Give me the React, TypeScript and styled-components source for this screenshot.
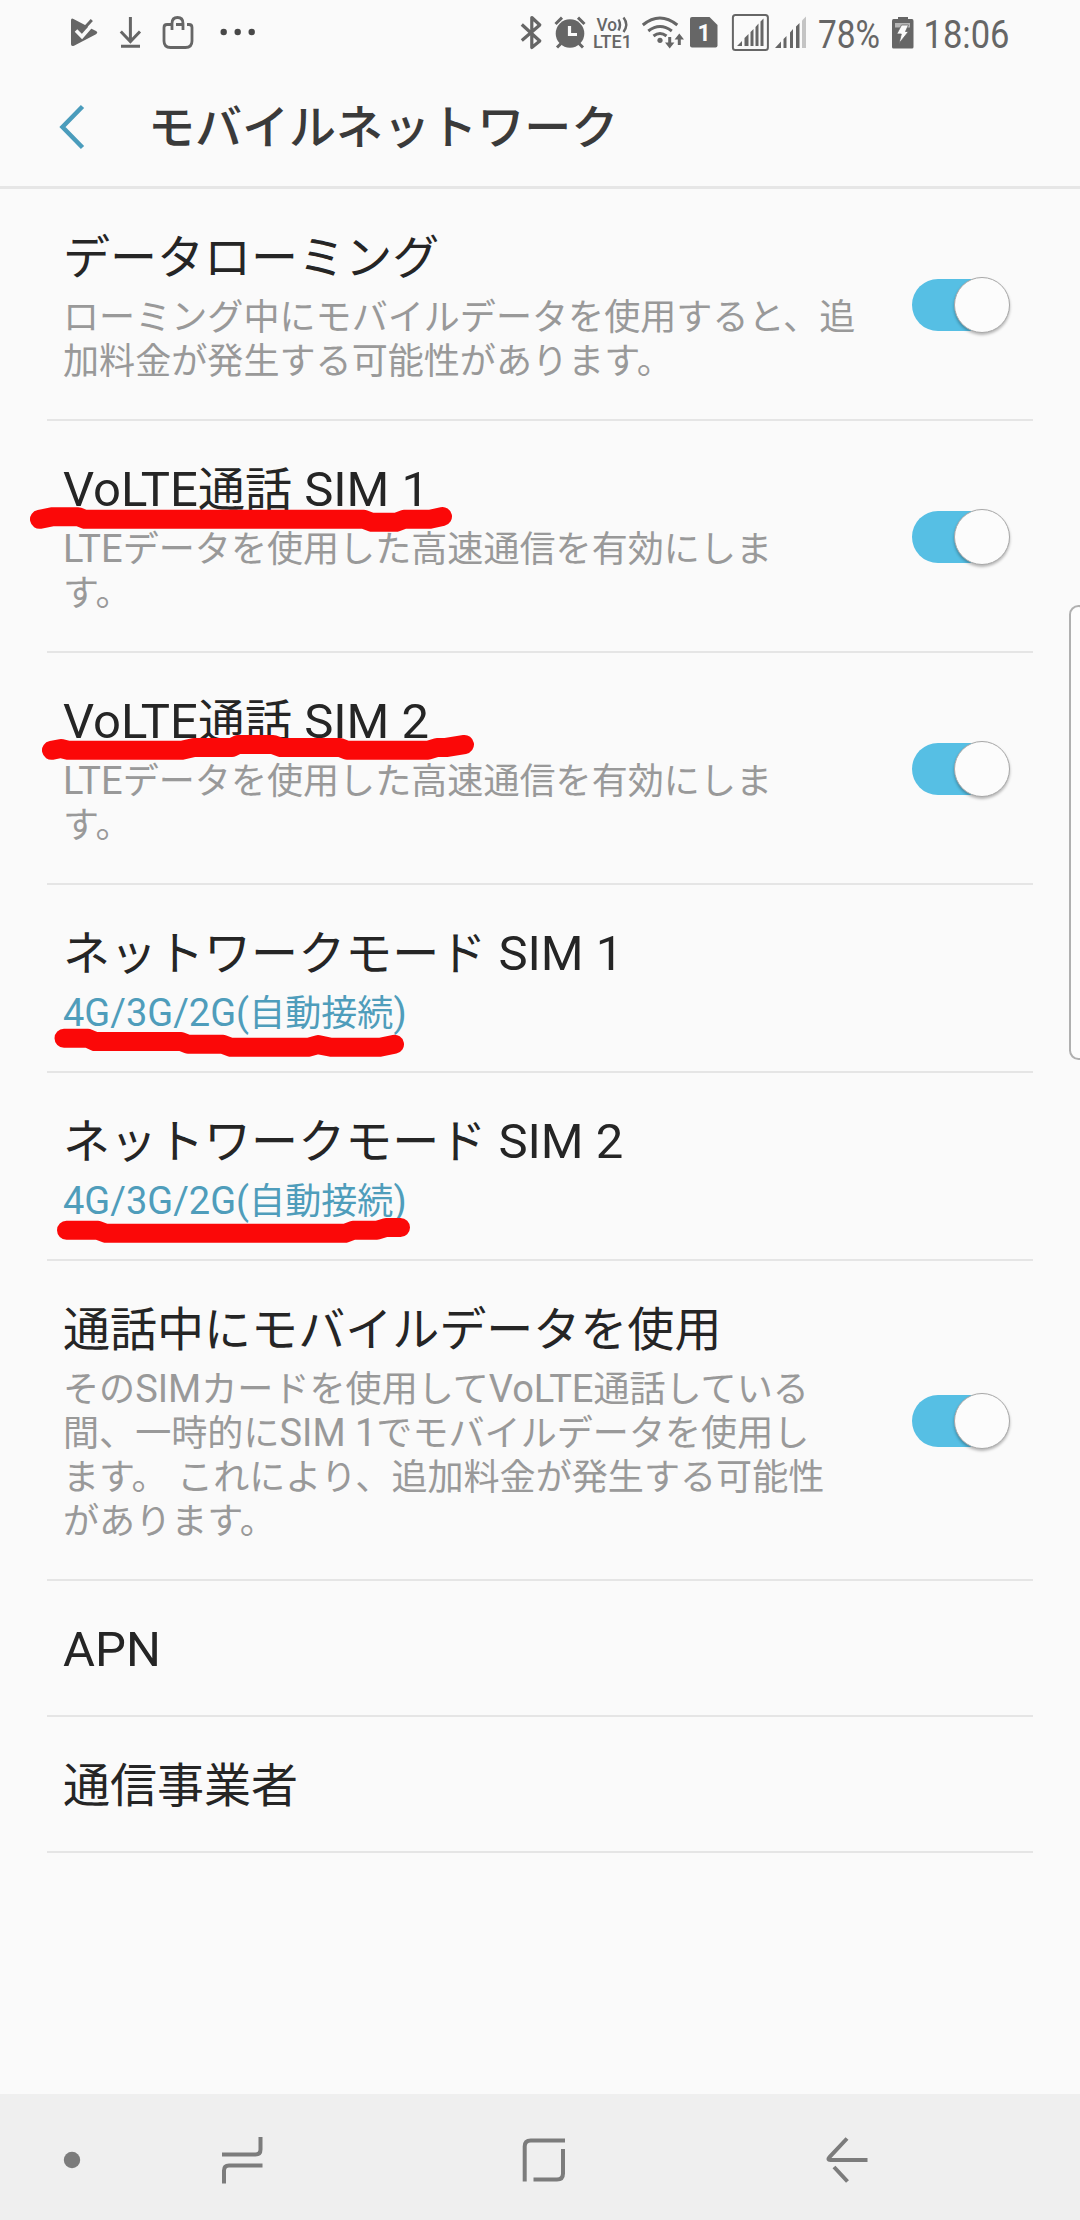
import React from "react";
import styled, { createGlobalStyle } from "styled-components";

const GlobalStyle = createGlobalStyle`
  * { box-sizing: border-box; }
  html, body { margin: 0; padding: 0; background: #fafafa; }
`;

const Screen = styled.div`
  position: relative;
  display: flex;
  flex-direction: column;
  width: 1080px;
  height: 2220px;
  overflow: hidden;
  background: #fafafa;
  font-family: Roboto, "Noto Sans CJK JP", sans-serif;
`;

const StatusBar = styled.div`
  display: flex;
  justify-content: space-between;
  height: 64px;
  padding: 0 57px 0 70px;
  color: #666;
`;

const StatusGroup = styled.div`
  display: flex;
`;

const Glyph = styled.svg<{ $gap?: number }>`
  display: block;
  flex: none;
  height: 64px;
  margin-left: ${(p) => p.$gap ?? 0}px;
  overflow: visible;
  fill: currentColor;
  stroke: none;
  font-family: Roboto, sans-serif;
`;

const Header = styled.header`
  display: flex;
  align-items: center;
  height: 125px;
  padding: 0 60px 0 59px;
  border-bottom: 3px solid #e6e6e6;
`;

const BackIcon = styled.svg`
  display: block;
  width: 28px;
  height: 46px;
  margin: 4px 61px 0 0;
  fill: none;
  stroke: #4a9cbc;
  stroke-width: 4.5;
`;

const Heading = styled.h1`
  margin: 5px 0 0;
  font-size: 49px;
  line-height: 62px;
  font-weight: 500;
  color: #3a3a3a;
  white-space: nowrap;
`;

const List = styled.main`
  display: flex;
  flex: 1;
  flex-direction: column;
  padding: 0 47px;
`;

const Row = styled.section<{ $simple: boolean }>`
  display: flex;
  align-items: center;
  justify-content: space-between;
  padding: 38px 23px ${(p) => (p.$simple ? 34 : 36)}px 16px;
  border-bottom: 2px solid #e5e5e5;
`;

const RowText = styled.div`
  display: flex;
  flex-direction: column;
  gap: 6px;
`;

const RowTitle = styled.div`
  font-size: 49px;
  line-height: 62px;
  color: #252525;
  white-space: nowrap;
`;

const RowSub = styled.div<{ $accent?: boolean }>`
  font-size: 38px;
  line-height: 44px;
  color: ${(p) => (p.$accent ? "#4f9dbb" : "#999")};
  white-space: pre;

  span {
    font-size: 36.1px;
  }
`;

const Kana = styled.span`
  font-size: 0.96em;
  line-height: 0;
`;

const Track = styled.div`
  position: relative;
  flex: none;
  width: 98px;
  height: 52px;

  &::before {
    content: "";
    display: block;
    width: 92px;
    height: 52px;
    border-radius: 26px;
    background: #56bfe4;
  }
`;

const Knob = styled.div`
  position: absolute;
  top: -2px;
  right: 0;
  width: 56px;
  height: 56px;
  border: 1px solid #a8a8a8;
  border-radius: 50%;
  background: #fcfcfc;
  box-shadow: 0 2px 3px rgba(0, 0, 0, 0.28);
`;

const EdgePanel = styled.div`
  position: absolute;
  top: 605px;
  right: -8px;
  width: 19px;
  height: 455px;
  border: 2px solid #b0b0b0;
  border-radius: 15px;
  background: #fdfdfd;
`;

const Marker = styled.svg`
  position: absolute;
  inset: 0;
  width: 1080px;
  height: 2220px;
  pointer-events: none;
  fill: none;
  stroke: #fb0808;
  stroke-width: 19;
  stroke-linecap: round;
  stroke-linejoin: round;
`;

const NavBar = styled.nav`
  display: flex;
  align-items: center;
  height: 126px;
  padding: 0 0 0 62px;
  background: #efefef;
`;

const NavIcon = styled.svg<{ $gap?: number }>`
  display: block;
  flex: none;
  height: 60px;
  margin: 6px 0 0 ${(p) => p.$gap ?? 0}px;
  fill: none;
  stroke: #7c7c7c;
  stroke-width: 4;
`;

/* Japanese runs are set slightly smaller than the Latin around them. */
function Mixed({ text }: { text: string }) {
  const parts = text.match(/[\u3000-\u9fff\uff00-\uffef]+|[^\u3000-\u9fff\uff00-\uffef]+/g) ?? [];
  return (
    <>
      {parts.map((part, i) =>
        /[\u3000-\u9fff\uff00-\uffef]/.test(part) ? <Kana key={i}>{part}</Kana> : part
      )}
    </>
  );
}

interface Setting {
  title: string;
  sub?: string;
  accent?: boolean;
  toggle?: boolean;
}

const settings: Setting[] = [
  {
    title: "データローミング",
    sub: "ローミング中にモバイルデータを使用すると、追\n加料金が発生する可能性があります。",
    toggle: true,
  },
  { title: "VoLTE通話 SIM 1", sub: "LTEデータを使用した高速通信を有効にしま\nす。", toggle: true },
  { title: "VoLTE通話 SIM 2", sub: "LTEデータを使用した高速通信を有効にしま\nす。", toggle: true },
  { title: "ネットワークモード SIM 1", sub: "4G/3G/2G(自動接続)", accent: true },
  { title: "ネットワークモード SIM 2", sub: "4G/3G/2G(自動接続)", accent: true },
  {
    title: "通話中にモバイルデータを使用",
    sub: "そのSIMカードを使用してVoLTE通話している\n間、一時的にSIM 1でモバイルデータを使用し\nます。 これにより、追加料金が発生する可能性\nがあります。",
    toggle: true,
  },
  { title: "APN" },
  { title: "通信事業者" },
];

function Status() {
  return (
    <StatusBar>
      <StatusGroup>
        <Glyph width="28" viewBox="70 0 28 64">
          <path d="M71 20.500q0-2.800 2.500-1.500L85 25l7 4 4 2q2.500 1.500 0 3.200L74 45.800q-3 1-3-1.500z" />
          <path d="M76 30.500l6 6L93 24" fill="none" stroke="#fafafa" strokeWidth="3.600" />
          <path d="M84.500 28L91.800 20" fill="none" stroke="currentColor" strokeWidth="3" />
        </Glyph>
        <Glyph width="24" viewBox="119 0 24 64" $gap={21}>
          <path d="M130.400 17v25M120.800 31.500l9.600 10 9.600-10M121 46.300h19" fill="none" stroke="currentColor" strokeWidth="3" />
        </Glyph>
        <Glyph width="32" viewBox="162 0 32 64" $gap={19}>
          <g fill="none" stroke="currentColor" strokeWidth="2.800">
            <path d="M172 24.500h-5q-3 0-3 3V41q0 6.500 6.500 6.500h15q6.500 0 6.500-6.500V27.500q0-3-3-3h-2" />
            <path d="M172 30v-6.500q0-6 5.500-6t5.500 6V30M176 24.500h7" />
          </g>
        </Glyph>
        <Glyph width="38" viewBox="219 0 38 64" $gap={25}>
          <g fill="#484848">
            <circle cx="223.700" cy="32" r="3.200" />
            <circle cx="237.700" cy="32" r="3.200" />
            <circle cx="251.700" cy="32" r="3.200" />
          </g>
        </Glyph>
      </StatusGroup>

      <StatusGroup>
        <Glyph width="24" viewBox="520 0 24 64">
          <path d="M521.800 24.500l18 16.500-8 6.500V17.500l8 7.500-18 15.500" fill="none" stroke="currentColor" strokeWidth="3.200" strokeLinejoin="round" />
        </Glyph>
        <Glyph width="32" viewBox="554 0 32 64" $gap={10}>
          <circle cx="570" cy="33.500" r="14.300" />
          <path d="M555.500 24l6.500-6.300M584.500 24l-6.500-6.300M561 43.500l-4 4M579 43.500l4 4" stroke="currentColor" strokeWidth="3" />
          <path d="M569.500 26v8.500h7.500" fill="none" stroke="#fafafa" strokeWidth="3.200" />
        </Glyph>
        <Glyph width="40" viewBox="593 0 40 64" $gap={7}>
          <text x="596.500" y="30.500" fontSize="17.500" fontWeight="500" textLength="20.500" lengthAdjust="spacingAndGlyphs">Vo</text>
          <path d="M618.500 19.500q3 5 0 11M623.500 17.500q5.500 7 0 14.500" fill="none" stroke="currentColor" strokeWidth="2.400" />
          <text x="593" y="48" fontSize="18.500" fontWeight="500" textLength="39" lengthAdjust="spacingAndGlyphs">LTE1</text>
        </Glyph>
        <Glyph width="44" viewBox="641 0 44 64" $gap={8}>
          <g fill="none" stroke="currentColor" strokeWidth="3">
            <path d="M642.800 25q17-14 34.500 0M648.300 31q11.700-9 23.500 0M653.500 36q6.500-5 13 0" />
            <path d="M669.700 37v9M679.300 45v-9" />
          </g>
          <circle cx="660" cy="40.300" r="2.600" />
          <path d="M665 42.500h9.400l-4.700 6zM674.600 39.500h9.400l-4.700-6z" />
        </Glyph>
        <Glyph width="28" viewBox="690 0 28 64" $gap={5}>
          <path d="M692 17h17.500l8 8v20.500q0 2-2 2H692q-2 0-2-2V19q0-2 2-2z" />
          <text x="697.500" y="41" fontSize="23" fontWeight="700" fill="#fafafa">1</text>
        </Glyph>
        <Glyph width="38" viewBox="731 0 38 64" $gap={13}>
          <rect x="732.900" y="14.900" width="35" height="35" rx="2.500" fill="none" stroke="currentColor" strokeWidth="2" />
          <path d="M737 46l5-5v5zM744.500 46v-8l4-4V46zM750.500 46V32l3-3V46zM755.500 46V27l3-3.500V46zM760.500 46V21.500l3-3V46z" />
        </Glyph>
        <Glyph width="33" viewBox="774 0 33 64" $gap={5}>
          <path d="M775 48l6-6.500V48zM783.500 48V39l3-3V48zM790 48V32.500l3-3.500V48zM796 48V26.500l3.500-3.500V48z" />
          <path d="M802 48V20.500l4-4V48z" fill="#c4c4c4" />
        </Glyph>
        <Glyph width="78" viewBox="812 0 78 64" $gap={5}>
          <text x="818" y="48" fontSize="39" textLength="62" lengthAdjust="spacingAndGlyphs">78%</text>
        </Glyph>
        <Glyph width="22" viewBox="892 0 22 64" $gap={2}>
          <path d="M892 21q0-2 1.500-2h4.500v-2h10v2h4q1.500 0 1.500 2V47q0 1.500-1.500 1.500h-18.500q-1.500 0-1.500-1.500z" />
          <path d="M895 23h15v4.500h-15z" fill="#b5b5b5" />
          <path d="M901.500 25h7l-3 6.500h3L899 43.500l2.300-9.500h-4.500z" fill="#fafafa" stroke="#666" strokeWidth=".8" />
        </Glyph>
        <Glyph width="108" viewBox="915 0 108 64" $gap={1}>
          <text x="923.500" y="48" fontSize="39" textLength="86" lengthAdjust="spacingAndGlyphs">18:06</text>
        </Glyph>
      </StatusGroup>
    </StatusBar>
  );
}

export default function App() {
  return (
    <Screen lang="ja">
      <GlobalStyle />
      <Status />
      <Header>
        <BackIcon viewBox="0 0 28 46">
          <path d="M23.500 2.500L3.500 23l20 20.500" />
        </BackIcon>
        <Heading>
          <Mixed text="モバイルネットワーク" />
        </Heading>
      </Header>

      <List>
        {settings.map((s) => (
          <Row key={s.title} $simple={!s.sub}>
            <RowText>
              <RowTitle>
                <Mixed text={s.title} />
              </RowTitle>
              {s.sub && (
                <RowSub $accent={s.accent}>
                  <Mixed text={s.sub} />
                </RowSub>
              )}
            </RowText>
            {s.toggle && (
              <Track role="switch" aria-checked="true">
                <Knob />
              </Track>
            )}
          </Row>
        ))}
      </List>

      <NavBar>
        <NavIcon width="20" viewBox="62 2130 20 60">
          <circle cx="72" cy="2160" r="8.200" fill="#7c7c7c" stroke="none" />
        </NavIcon>
        <NavIcon width="44" viewBox="220 2130 44 60" $gap={138}>
          <path d="M260.500 2137v12.500q0 5-5 5H222M224 2183.500v-13q0-5 5-5h33.500" />
        </NavIcon>
        <NavIcon width="46" viewBox="521 2130 46 60" $gap={257}>
          <path d="M524.700 2181.500v-35q0-6 6-6H565M563 2149v24.500q0 6-6 6h-23.500" />
        </NavIcon>
        <NavIcon width="44" viewBox="825 2130 44 60" $gap={258}>
          <path d="M847 2138.500l-17.500 18.700q-2.500 2.800 1 2.800H867.500M834 2167l13.500 14.500" />
        </NavIcon>
      </NavBar>

      <EdgePanel />
      <Marker viewBox="0 0 1080 2220">
        <path d="M39.500 519.300L53 516.700H78L85 519.300H364L372 522.300H396L404 519.300H430L442.500 516.500" />
        <path d="M51.500 750.300L61 748.500L68 750.300H182L194 747.500H232L238 744.500H273L281 747.500H340L347 750.300H428L437 747.500H446L464.500 744.500" />
        <path d="M64 1038.300H88L95 1041.500H181L188 1044.300H223L231 1047.300H308L318 1044.600L331 1047.300H380L394.500 1044.300" />
        <path d="M66.500 1230.300H98L106 1233.300H345L353 1230.300H377L386 1227.500H400.500" />
      </Marker>
    </Screen>
  );
}
